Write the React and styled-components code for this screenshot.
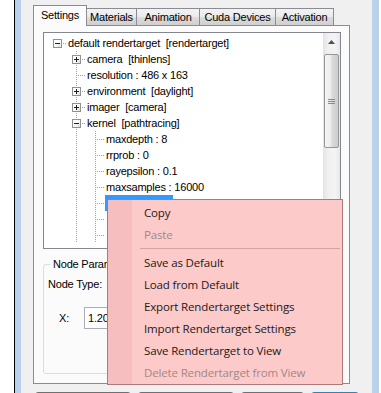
import React from 'react';
import styled, { createGlobalStyle } from 'styled-components';

const GlobalStyle = createGlobalStyle`
  html, body { margin: 0; padding: 0; background: #ffffff; }
  body {
    font-family: "Liberation Sans", Arial, sans-serif;
    font-size: 11px;
    letter-spacing: -0.2px;
    color: #000;
  }
`;

const Page = styled.div`
  position: relative;
  width: 381px;
  height: 393px;
  overflow: hidden;
  padding-left: 14px;
  box-sizing: border-box;
`;

const Window = styled.div`
  width: 357px;
  height: 393px;
  box-sizing: border-box;
  border-left: 1px solid #000;
  border-right: 1px solid #000;
  display: flex;
`;

const Frame = styled.div`
  flex: 1;
  border-left: 6px solid #b9d1ea;
  border-right: 7px solid #b9d1ea;
  background: #f0f0f0;
  padding: 5px 13px 0 12px;
`;

const TabStrip = styled.div`
  display: flex;
  align-items: flex-end;
  height: 20px;
`;

const Tab = styled.div`
  position: relative;
  z-index: ${p => (p.$active ? 2 : 1)};
  width: ${p => p.$w}px;
  height: ${p => (p.$active ? 21 : 17)}px;
  margin-bottom: ${p => (p.$active ? -1 : 0)}px;
  margin-left: ${p => (p.$first ? 0 : -1)}px;
  box-sizing: border-box;
  border: 1px solid #898c95;
  border-bottom: none;
  background: ${p => (p.$active ? '#fbfbfb' : 'linear-gradient(#f2f2f2, #ebebeb 50%, #dddddd 50%, #cfcfcf)')};
  display: flex;
  align-items: center;
  justify-content: center;
  padding-bottom: ${p => (p.$active ? 2 : 0)}px;
  white-space: nowrap;
`;

const TabPage = styled.div`
  width: 317px;
  height: 359px;
  box-sizing: border-box;
  border: 1px solid #898c95;
  background: #fbfbfb;
  padding: 6px 0 0 9px;
`;

const TreeBox = styled.div`
  width: 298px;
  height: 217px;
  box-sizing: border-box;
  border: 1px solid #828790;
  background: #fff;
  display: flex;
  overflow: hidden;
`;

const TreeRows = styled.div`
  flex: 1;
  padding: 2px 0 0 4px;
  overflow: hidden;
`;

const Row = styled.div`
  display: flex;
  height: 16px;
`;

const Cell = styled.div`
  position: relative;
  width: 19px;
  flex: none;

  &::before {
    content: '';
    display: ${p => (p.$line ? 'block' : 'none')};
    position: absolute;
    left: 9px;
    top: 0;
    width: 1px;
    height: 16px;
    background: linear-gradient(#a0a0a0 50%, transparent 50%) 0 0 / 1px 2px repeat-y;
  }

  &::after {
    content: '';
    display: ${p => (p.$stub ? 'block' : 'none')};
    position: absolute;
    left: 10px;
    top: 8px;
    width: 9px;
    height: 1px;
    background: linear-gradient(to right, transparent 50%, #a0a0a0 50%) 0 0 / 2px 1px repeat-x;
  }
`;

const Expander = styled.span`
  position: absolute;
  z-index: 1;
  left: 5px;
  top: 4px;
  width: 9px;
  height: 9px;
  box-sizing: border-box;
  border: 1px solid #919191;
  background: linear-gradient(135deg, #ffffff 40%, #dedede);

  &::before {
    content: '';
    position: absolute;
    left: 1px;
    top: 3px;
    width: 5px;
    height: 1px;
    background: #1e1e1e;
  }

  &::after {
    content: '';
    display: ${p => (p.$open ? 'none' : 'block')};
    position: absolute;
    left: 3px;
    top: 1px;
    width: 1px;
    height: 5px;
    background: #1e1e1e;
  }
`;

const Label = styled.span`
  height: 16px;
  min-width: ${p => p.$minW || 0}px;
  line-height: 16px;
  padding: 0 2px 0 1px;
  white-space: pre;
  background: ${p => (p.$selected ? '#3399ff' : 'transparent')};
  color: ${p => (p.$selected ? '#fff' : '#000')};
`;

const ScrollBar = styled.div`
  width: 17px;
  flex: none;
  display: flex;
  flex-direction: column;
  background: linear-gradient(to right, #e3e3e3, #f0f0f0 30%, #f4f4f4 70%, #e8e8e8);
`;

const ScrollArrow = styled.div`
  height: 17px;
  display: flex;
  align-items: center;
  justify-content: center;
`;

const Thumb = styled.div`
  margin: 4px 1px 0 1px;
  height: 94px;
  box-sizing: border-box;
  border: 1px solid #979797;
  border-radius: 2px;
  background: linear-gradient(to right, #f6f6f6, #eaeaea 45%, #d9d9d9 55%, #cdcdcd);
  display: flex;
  align-items: center;
  justify-content: center;
`;

const GroupBox = styled.div`
  position: relative;
  width: 298px;
  height: 110px;
  margin-top: 15px;
  box-sizing: border-box;
  border: 1px solid #d5dfe5;
  border-radius: 3px;
  padding: 12px 0 0 4px;
`;

const GroupTitle = styled.span`
  position: absolute;
  left: 6px;
  top: -7px;
  padding: 0 3px 0 3px;
  background: #fbfbfb;
  line-height: 13px;
`;

const FieldLabel = styled.div`
  line-height: 14px;
`;

const FieldRow = styled.div`
  display: flex;
  align-items: center;
  margin-top: 16px;
  padding-left: 11px;
  gap: 15px;
`;

const TextBox = styled.div`
  width: 120px;
  height: 22px;
  box-sizing: border-box;
  border: 1px solid #abadb3;
  background: #fff;
  padding-left: 3px;
  line-height: 20px;
`;

const ButtonRow = styled.div`
  display: flex;
  gap: 7px;
  margin-top: 8px;
  padding-left: 2px;
`;

const Button = styled.div`
  width: ${p => p.$w}px;
  height: 23px;
  box-sizing: border-box;
  border: 1px solid ${p => (p.$default ? '#3c7fb1' : '#707070')};
  border-radius: 3px;
  background: linear-gradient(#f2f2f2, #ebebeb 50%, #dddddd 50%, #cfcfcf);
`;

const Menu = styled.div`
  position: absolute;
  left: 107px;
  top: 199px;
  width: 236px;
  box-sizing: border-box;
  padding: 1px;
  border: 1px solid #b27878;
  background: linear-gradient(to right, #f6bebe 0, #f6bebe 24px, #fdcaca 24px);
  font-family: "Open Sans", "Noto Sans", sans-serif;
  font-size: 11.5px;
  letter-spacing: -0.15px;
`;

const MenuItem = styled.div`
  height: 22px;
  display: flex;
  align-items: center;
  padding-left: 35px;
  color: ${p => (p.$disabled ? '#9e8888' : '#1a1a1a')};
  white-space: nowrap;
`;

const MenuSeparator = styled.div`
  height: 1px;
  margin: 3px 1px 2px 31px;
  background: #d8a2a2;
`;

const tabs = [
  { name: 'Settings', w: 54, active: true },
  { name: 'Materials', w: 51 },
  { name: 'Animation', w: 64 },
  { name: 'Cuda Devices', w: 77 },
  { name: 'Activation', w: 59 },
];

// each column: line = vertical dotted line, stub = horizontal dots, box = 'plus' | 'minus'
const L1 = (box, label) => ({ cols: [{}, { line: true, stub: true, box }], label });
const L2 = (label, extra = {}) => ({ cols: [{}, { line: true }, { line: true, stub: true }], label, ...extra });

const rows = [
  { cols: [{ stub: true, box: 'minus' }], label: 'default rendertarget  [rendertarget]' },
  L1('plus', 'camera  [thinlens]'),
  L1(null, 'resolution : 486 x 163'),
  L1('plus', 'environment  [daylight]'),
  L1('plus', 'imager  [camera]'),
  L1('minus', 'kernel  [pathtracing]'),
  L2('maxdepth : 8'),
  L2('rrprob : 0'),
  L2('rayepsilon : 0.1'),
  L2('maxsamples : 16000'),
  // rows below are hidden under the context menu
  L2('', { selected: true, minW: 65 }),
  L2(''),
  L2(''),
];

const menuItems = [
  { label: 'Copy' },
  { label: 'Paste', disabled: true },
  { sep: true },
  { label: 'Save as Default' },
  { label: 'Load from Default' },
  { label: 'Export Rendertarget Settings' },
  { label: 'Import Rendertarget Settings' },
  { label: 'Save Rendertarget to View' },
  { label: 'Delete Rendertarget from View', disabled: true },
];

const App = () => (
  <Page>
    <GlobalStyle />
    <Window>
      <Frame>
        <TabStrip>
          {tabs.map((t, i) => (
            <Tab key={t.name} $w={t.w} $active={t.active} $first={i === 0}>{t.name}</Tab>
          ))}
        </TabStrip>
        <TabPage>
          <TreeBox>
            <TreeRows>
              {rows.map((r, i) => (
                <Row key={i}>
                  {r.cols.map((c, j) => (
                    <Cell key={j} $line={c.line} $stub={c.stub}>
                      {c.box && <Expander $open={c.box === 'minus'} />}
                    </Cell>
                  ))}
                  <Label $selected={r.selected} $minW={r.minW}>{r.label}</Label>
                </Row>
              ))}
            </TreeRows>
            <ScrollBar>
              <ScrollArrow>
                <svg width="7" height="4" viewBox="0 0 7 4">
                  <path d="M0 4 L3.5 0 L7 4 Z" fill="#505050" />
                </svg>
              </ScrollArrow>
              <Thumb>
                <svg width="7" height="7" viewBox="0 0 7 7">
                  <path d="M0 1.5h7M0 3.5h7M0 5.5h7" stroke="#8a8a8a" strokeWidth="1" />
                </svg>
              </Thumb>
            </ScrollBar>
          </TreeBox>
          <GroupBox>
            <GroupTitle>Node Parameters</GroupTitle>
            <FieldLabel>Node Type:</FieldLabel>
            <FieldRow>
              <span>X:</span>
              <TextBox>1.2000</TextBox>
            </FieldRow>
          </GroupBox>
        </TabPage>
        <ButtonRow>
          <Button $w={96} />
          <Button $w={96} />
          <Button $w={63} />
          <Button $w={48} $default />
        </ButtonRow>
      </Frame>
    </Window>
    <Menu>
      {menuItems.map((m, i) =>
        m.sep ? <MenuSeparator key={i} /> : <MenuItem key={i} $disabled={m.disabled}>{m.label}</MenuItem>
      )}
    </Menu>
  </Page>
);

export default App;
